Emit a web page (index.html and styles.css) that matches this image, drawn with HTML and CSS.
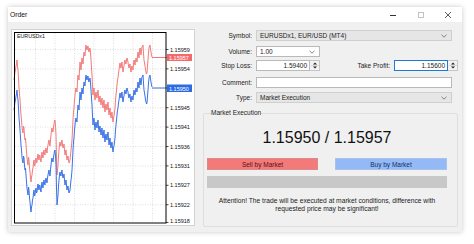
FILE: index.html
```html
<!DOCTYPE html>
<html>
<head>
<meta charset="utf-8">
<link rel="stylesheet" href="styles.css">
</head>
<body>
<div class="window">
  <div class="titlebar">
    <span class="title">Order</span>
    <span class="ctl"><svg width="8" height="8" viewBox="0 0 8 8"><line x1="1" y1="4.5" x2="7" y2="4.5" stroke="#333" stroke-width="1"/></svg></span>
    <span class="ctl"><svg width="8" height="8" viewBox="0 0 8 8"><rect x="1.5" y="1.5" width="5" height="5" fill="none" stroke="#b4b4b4" stroke-width="0.8"/></svg></span>
    <span class="ctl"><svg width="8" height="8" viewBox="0 0 8 8"><path d="M1 1L7 7M7 1L1 7" stroke="#333" stroke-width="0.8"/></svg></span>
  </div>
  <div class="content">
    <div class="chart">
      <svg class="chart-svg" width="182" height="195" viewBox="12 30 182 195">
        <defs>
          <polyline id="series" fill="none" points="14,80 14.5,76 15,72 15.5,70 16,66 16.5,64 17,60 17.5,66 18,70 18.5,78 19,88 19.5,94 20,100 20.5,108 21,115 21.5,120 22,127 22.5,131 23,133 23.5,126 24,128 24.5,136 25,140 25.5,138 26,145 26.5,152 27,158 27.5,162 28,165 28.5,157 29,160 29.5,168 30,172 30.5,178 31,182 31.5,177 32,175 32.5,170 33,168 33.5,163 34,160 34.5,166 35,165 35.5,160 36,158 36.5,163 37,162 37.5,157 38,154 38.5,158 39,160 39.5,155 40,156 40.5,160 41,162 41.5,156 42,152 42.5,156 43,158 43.5,153 44,150 44.5,154 45,155 45.5,150 46,148 46.5,151 47,153 47.5,148 48,145 48.5,142 49,140 49.5,144 50,146 50.5,140 51,135 51.5,130 52,128 52.5,131 53,132 53.5,127 54,124 54.5,121 55,120 55.5,126 56,135 56.5,158 57,175 57.5,170 58,165 58.5,156 59,150 59.5,145 60,142 60.5,145 61,146 61.5,142 62,140 62.5,145 63,148 63.5,146 64,144 64.5,150 65,155 65.5,152 66,150 66.5,155 67,160 67.5,157 68,156 68.5,160 69,163 69.5,162 70,160 70.5,155 71,150 71.5,146 72,140 72.5,130 73,120 73.5,112 74,108 74.5,100 75,95 75.5,90 76,88 76.5,91 77,92 77.5,82 78,75 78.5,78 79,80 79.5,70 80,62 80.5,66 81,70 81.5,63 82,58 82.5,61 83,64 83.5,57 84,52 84.5,55 85,56 85.5,49 86,45 86.5,48 87,50 87.5,47 88,46 88.5,50 89,52 89.5,49 90,48 90.5,53 91,60 91.5,68 92,75 92.5,86 93,95 93.5,90 94,88 94.5,95 95,100 95.5,95 96,92 96.5,96 97,98 97.5,93 98,90 98.5,97 99,102 99.5,98 100,96 100.5,101 101,105 101.5,101 102,98 102.5,104 103,108 103.5,103 104,100 104.5,107 105,112 105.5,107 106,104 106.5,108 107,110 107.5,105 108,102 108.5,109 109,115 109.5,111 110,108 110.5,114 111,118 111.5,114 112,112 112.5,118 113,122 113.5,118 114,116 114.5,112 115,108 115.5,100 116,95 116.5,90 117,85 117.5,80 118,78 118.5,73 119,70 119.5,66 120,63 120.5,66 121,68 121.5,64 122,62 122.5,68 123,72 123.5,68 124,66 124.5,62 125,60 125.5,63 126,64 126.5,60 127,58 127.5,60 128,62 128.5,66 129,68 129.5,65 130,64 130.5,69 131,72 131.5,68 132,66 132.5,69 133,70 133.5,64 134,60 134.5,63 135,65 135.5,61 136,58 136.5,60 137,62 137.5,56 138,52 138.5,55 139,58 139.5,52 140,48 140.5,52 141,55 141.5,50 142,47 142.5,46 143,45 143.5,53 144,60 144.5,63 145,66 145.5,70 146,72 146.5,74 147,73 147.5,66 148,60 148.5,53 149,48 149.5,46 150,45 150.5,49 151,52 151.5,55 152,57"/>
        </defs>
        <g class="grid">
          <line x1="15" y1="49.5" x2="166" y2="49.5"/>
          <line x1="15" y1="68.9" x2="166" y2="68.9"/>
          <line x1="15" y1="88.3" x2="166" y2="88.3"/>
          <line x1="15" y1="107.7" x2="166" y2="107.7"/>
          <line x1="15" y1="127.1" x2="166" y2="127.1"/>
          <line x1="15" y1="146.5" x2="166" y2="146.5"/>
          <line x1="15" y1="165.9" x2="166" y2="165.9"/>
          <line x1="15" y1="185.3" x2="166" y2="185.3"/>
          <line x1="15" y1="204.7" x2="166" y2="204.7"/>
          <line x1="35.5" y1="33" x2="35.5" y2="223"/>
          <line x1="55" y1="33" x2="55" y2="223"/>
          <line x1="74.5" y1="33" x2="74.5" y2="223"/>
          <line x1="94" y1="33" x2="94" y2="223"/>
          <line x1="113.5" y1="33" x2="113.5" y2="223"/>
          <line x1="133" y1="33" x2="133" y2="223"/>
          <line x1="152.5" y1="33" x2="152.5" y2="223"/>
        </g>
        <use href="#series" stroke="#f47a7a" stroke-width="1"/>
        <use href="#series" stroke="#3a72e6" stroke-width="1" transform="translate(0,30)"/>
        <line x1="152" y1="57.5" x2="167" y2="57.5" stroke="#f47a7a"/>
        <line x1="152" y1="88" x2="167" y2="88" stroke="#3a72e6"/>
        <rect class="plot" x="14.5" y="32.5" width="151.5" height="190.5"/>
        <g class="ticks">
          <line x1="166" y1="49.5" x2="168.5" y2="49.5"/>
          <line x1="166" y1="68.9" x2="168.5" y2="68.9"/>
          <line x1="166" y1="107.7" x2="168.5" y2="107.7"/>
          <line x1="166" y1="127.1" x2="168.5" y2="127.1"/>
          <line x1="166" y1="146.5" x2="168.5" y2="146.5"/>
          <line x1="166" y1="165.9" x2="168.5" y2="165.9"/>
          <line x1="166" y1="185.3" x2="168.5" y2="185.3"/>
          <line x1="166" y1="204.7" x2="168.5" y2="204.7"/>
          <line x1="166" y1="222.5" x2="168.5" y2="222.5"/>
        </g>
        <text class="sym" x="17" y="38">EURUSDx1</text>
        <g class="axis">
          <text x="170" y="51.5">1.15959</text>
          <text x="170" y="71">1.15954</text>
          <text x="170" y="109.8">1.15945</text>
          <text x="170" y="129.2">1.15941</text>
          <text x="170" y="148.6">1.15936</text>
          <text x="170" y="168">1.15931</text>
          <text x="170" y="187.4">1.15927</text>
          <text x="170" y="206.8">1.15922</text>
          <text x="170" y="222.5">1.15918</text>
        </g>
        <rect x="167" y="54" width="25" height="7" fill="#f46a6a"/>
        <text class="tag" x="169" y="59.8">1.15957</text>
        <rect x="167" y="84.5" width="25" height="7.5" fill="#2c6ce2"/>
        <text class="tag" x="169" y="90.5">1.15950</text>
      </svg>
    </div>
    <div class="panel">
      <div class="row r-symbol">
        <label>Symbol:</label>
        <div class="combo grey wide"><span class="val">EURUSDx1, EUR/USD (MT4)</span><svg class="chev" width="6" height="4" viewBox="0 0 6 4"><path d="M0.5 0.8L3 3.2L5.5 0.8" fill="none" stroke="#666" stroke-width="0.8"/></svg></div>
      </div>
      <div class="row r-volume">
        <label>Volume:</label>
        <div class="combo white short"><span class="val">1.00</span><svg class="chev" width="6" height="4" viewBox="0 0 6 4"><path d="M0.5 0.8L3 3.2L5.5 0.8" fill="none" stroke="#666" stroke-width="0.8"/></svg></div>
      </div>
      <div class="row r-stop">
        <label>Stop Loss:</label>
        <div class="spin-field">
          <div class="input num">1.59400</div>
          <div class="spinner"><svg width="8" height="9" viewBox="0 0 8 9"><path d="M2 3.5L4 1.5L6 3.5Z" fill="#222"/><line x1="0" y1="4.5" x2="8" y2="4.5" stroke="#c8c8c8" stroke-width="0.6"/><path d="M2 5.5L4 7.5L6 5.5Z" fill="#222"/></svg></div>
        </div>
        <span class="mid-label">Take Profit:</span>
        <div class="spin-field">
          <div class="input num focus">1.15600</div>
          <div class="spinner"><svg width="8" height="9" viewBox="0 0 8 9"><path d="M2 3.5L4 1.5L6 3.5Z" fill="#222"/><line x1="0" y1="4.5" x2="8" y2="4.5" stroke="#c8c8c8" stroke-width="0.6"/><path d="M2 5.5L4 7.5L6 5.5Z" fill="#222"/></svg></div>
        </div>
      </div>
      <div class="row r-comment">
        <label>Comment:</label>
        <div class="input wide"></div>
      </div>
      <div class="row r-type">
        <label>Type:</label>
        <div class="combo grey wide"><span class="val">Market Execution</span><svg class="chev" width="6" height="4" viewBox="0 0 6 4"><path d="M0.5 0.8L3 3.2L5.5 0.8" fill="none" stroke="#666" stroke-width="0.8"/></svg></div>
      </div>
      <fieldset class="exec">
        <legend>Market Execution</legend>
        <div class="exec-body">
          <div class="price">1.15950 / 1.15957</div>
          <div class="buttons">
            <div class="btn sell">Sell by Market</div>
            <div class="btn buy">Buy by Market</div>
          </div>
          <div class="bar"></div>
          <p class="note">Attention! The trade will be executed at market conditions, difference with<br>requested price may be significant!</p>
        </div>
      </fieldset>
    </div>
  </div>
</div>
</body>
</html>
```
FILE: styles.css
```css
* { box-sizing: border-box; }
html, body { margin: 0; padding: 0; background: #fff; }
body {
  font-family: "Liberation Sans", Arial, sans-serif;
  color: #222;
  width: 474px;
  height: 244px;
  overflow: hidden;
}
.window {
  margin: 7px 0 0 8px;
  width: 454px;
  height: 225px;
  background: #f0f0f0;
  box-shadow: 0 0 5px rgba(0,0,0,0.22);
  display: flex;
  flex-direction: column;
}
.titlebar {
  height: 15px;
  background: #fff;
  display: flex;
  align-items: center;
  padding-left: 2px;
  font-size: 6.8px;
  color: #111;
}
.title { flex: 1; }
.ctl {
  width: 27.5px;
  height: 15px;
  display: flex;
  align-items: center;
  justify-content: center;
}
.ctl svg { display: block; }
.content {
  flex: 1;
  display: flex;
  align-items: flex-start;
}
.chart {
  margin: 7px 0 0 3px;
  width: 184px;
  height: 197px;
  border: 1px solid #d2d2d2;
  background: #fff;
}
.chart-svg { display: block; }
.grid line { stroke: #c9c9c9; stroke-width: 0.6; stroke-dasharray: 1 1.5; }
.ticks line { stroke: #000; stroke-width: 0.7; }
.plot { fill: none; stroke: #000; stroke-width: 1; }
.sym { font-size: 5.3px; fill: #111; font-family: "Liberation Sans", Arial, sans-serif; }
.axis text { font-size: 5.5px; fill: #111; font-family: "Liberation Sans", Arial, sans-serif; }
.tag { font-size: 5.5px; fill: #fff; font-family: "Liberation Sans", Arial, sans-serif; }

.panel {
  margin-left: 8px;
  padding-top: 8px;
  width: 255px;
  font-size: 6.5px;
}
.row {
  display: flex;
  align-items: center;
  height: 11px;
}
.row label {
  width: 49px;
  margin-right: 4px;
  text-align: right;
  color: #222;
}
.r-volume { margin-top: 5px; }
.r-stop { margin-top: 3px; }
.r-comment { margin-top: 6px; }
.r-type { margin-top: 4px; }
.combo, .input {
  height: 11px;
  display: flex;
  align-items: center;
  padding: 0 3px;
  border: 1px solid #b9b9b9;
  background: #fff;
}
.combo .val { flex: 1; }
.combo.grey { background: #e6e6e6; border-color: #cfcfcf; }
.wide { width: 196px; }
.short { width: 64px; }
.chev { display: block; margin-right: 1px; }
.spin-field {
  display: flex;
  width: 64px;
  height: 11px;
}
.input.num {
  width: 54px;
  justify-content: flex-end;
  padding-right: 2px;
}
.input.focus { border-color: #1a7ad6; }
.spinner {
  width: 10px;
  height: 11px;
  display: flex;
  align-items: center;
  justify-content: center;
  border: 1px solid #c6c6c6;
  border-left: none;
  background: #f3f3f3;
}
.spinner svg { display: block; }
.mid-label {
  flex: 1;
  text-align: right;
  padding-right: 4px;
  color: #222;
}
.exec {
  margin: 6px 0 0 0;
  padding: 0 0 0 3px;
  border: 1px solid #dedede;
  border-radius: 2px;
  width: 255px;
  height: 118px;
  min-width: 0;
}
.exec legend {
  padding: 0;
  margin-left: 4px;
  line-height: 8px;
  font-size: 6.5px;
  color: #222;
}
.exec-body {
  width: 240px;
  margin-left: 0;
}
.price {
  margin-top: 11px;
  height: 20px;
  line-height: 20px;
  text-align: center;
  font-size: 16px;
  color: #111;
}
.buttons {
  margin-top: 10px;
  display: flex;
  justify-content: space-between;
}
.btn {
  height: 12px;
  width: 111px;
  display: flex;
  align-items: center;
  justify-content: center;
  font-size: 6.5px;
  border: 1px solid #c9c9c9;
}
.btn.sell { background: #f47a7a; color: #5a1010; border-color: #d98a8a; }
.btn.buy { width: 112px; background: #93b9f6; color: #14306a; border-color: #a9c2ea; }
.bar {
  margin-top: 6px;
  height: 12px;
  background: #c8c8c8;
}
.note {
  margin: 9px 0 0 0;
  text-align: center;
  font-size: 6.7px;
  line-height: 8px;
  color: #222;
}
```
